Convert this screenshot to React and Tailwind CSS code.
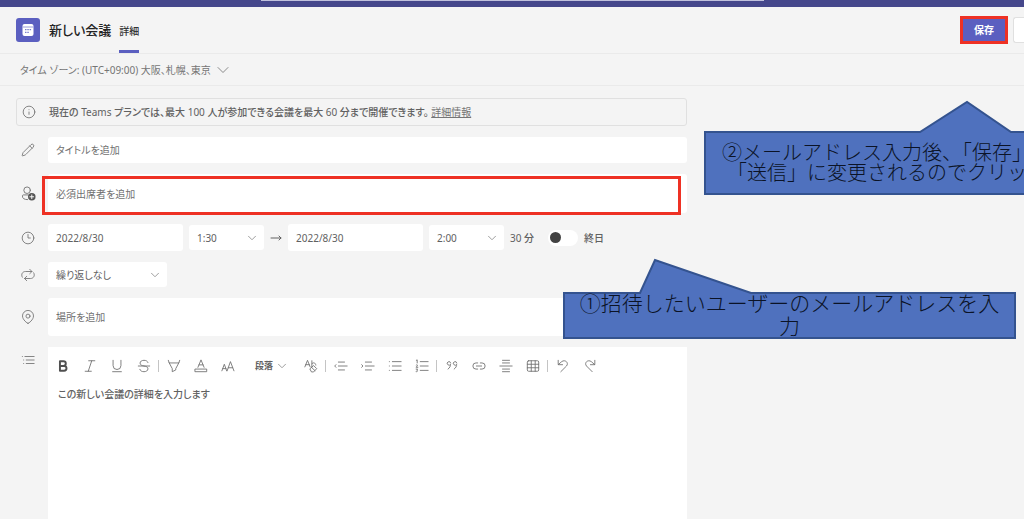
import { useState } from 'react';
import { ChevronDown, Info, Pencil, Clock3, MoveRight } from 'lucide-react';

const FIELD = 'rounded-[3px] bg-white px-2 text-[#616161] placeholder:text-[#707070] outline-none';

function Glyph({ children, className = 'size-[14px]' }) {
  return (
    <svg viewBox="0 0 16 16" className={className} fill="none" stroke="currentColor" strokeWidth="1"
      strokeLinecap="round" strokeLinejoin="round" aria-hidden="true">
      {children}
    </svg>
  );
}

const FORMAT_TOOLS = [
  { label: '太字', icon: <path d="M4.500 2.500h4a2.700 2.700 0 0 1 0 5.400h-4zM4.500 7.900h4.700a2.800 2.800 0 0 1 0 5.600H4.500z" stroke="#505050" strokeWidth="2.200" /> },
  { label: '斜体', icon: <path d="M6.500 2h7M2.500 14h7M10 2 6 14" /> },
  { label: '下線', icon: <path d="M3.500 1.500v6a4.500 4.500 0 0 0 9 0v-6M3 14.500h10" /> },
  { label: '取り消し線', icon: <path d="M12.500 4C12 2.500 10.500 1.500 8 1.500S3.500 2.700 3.500 4.700 5.500 7.500 8 8s4.500 1 4.500 3.200-2 3.300-4.500 3.300-4.300-1-4.800-2.700M1.500 8h13" /> },
];
const COLOR_TOOLS = [
  { label: '蛍光ペン', icon: <path d="M1.500 1.500 2.500 4.500h11l1-3M2.500 4.500 6 11v3.500l4-2V11l3.500-6.500" /> },
  { label: '文字の色', icon: <path d="M4.500 9.500 8 1l3.500 8.500M5.700 6.700h4.600M1.500 11.500h13v3h-13z" /> },
  { label: 'フォント サイズ', icon: <path d="M1 13.500 3.800 6l2.700 7.500M2 11h3.700M7 13.500 10.800 3l4 10.500M8.300 10h5" /> },
];
const LIST_TOOLS = [
  { label: 'インデントを減らす', icon: <path d="M5 3.500h7M5 8h10M5 12.500h7M2.200 6.500.8 8l1.400 1.500" /> },
  { label: 'インデントを増やす', icon: <path d="M5 3.500h7M5 8h10M5 12.500h7M.8 6.500 2.200 8 .8 9.500" /> },
  { label: '箇条書き', icon: <path d="M5 3h10M5 8h10M5 13h10M1.500 3h.1M1.500 8h.1M1.500 13h.1" /> },
  { label: '段落番号', icon: <path d="M6 3h9M6 8h9M6 13h9M1.500 1.500l1-.5v3.500M1.300 7c1-1 2.200 0 1.200 1L1.300 9.500h2M1.300 11.500h1.700l-1 1.300c1.500 0 1.300 2.200-.7 1.700" /> },
];
const INSERT_TOOLS = [
  { label: '引用', icon: <path d="M6.500 4.500a2 2 0 1 0-.2 1.500c.2 2-.8 4-2.800 5.500M13.500 4.500a2 2 0 1 0-.2 1.500c.2 2-.8 4-2.800 5.500" /> },
  { label: 'リンクの挿入', icon: <path d="M6.500 4.500h-2a3.500 3.500 0 0 0 0 7h2M9.500 4.500h2a3.500 3.500 0 0 1 0 7h-2M5 8h6" /> },
  { label: '水平線の挿入', icon: <path d="M4 1.500h8M4 4.500h8M1 8h14M4 11.500h8M4 14.500h8" /> },
  { label: '表の挿入', icon: <><rect x="1.500" y="2" width="13" height="12" rx="1.500" /><path d="M1.500 6h13M1.500 10h13M6 2v12M10.500 2v12" /></> },
];
const HISTORY_TOOLS = [
  { label: '元に戻す', icon: <path d="M2.500 1.500v5h5M2.700 6.300 6.500 3c4-3 8.500 1.500 5.500 5L5.500 14.500" /> },
  { label: 'やり直し', icon: <path d="M13.500 1.500v5h-5M13.300 6.300 9.500 3C5.500 0 1 4.500 4 8l6.500 6.500" /> },
];

function Tools({ items }) {
  return items.map(t => (
    <button key={t.label} type="button" aria-label={t.label} className="flex h-6 w-[26px] items-center justify-center">
      <Glyph>{t.icon}</Glyph>
    </button>
  ));
}

function Divider() {
  return <span className="h-3 w-0.5 border-l border-[#c4c4c4]" />;
}

function Row({ icon, children }) {
  return (
    <div className="flex items-center gap-2">
      <span className="flex w-6 shrink-0 justify-center text-[#757575]">{icon}</span>
      {children}
    </div>
  );
}

function Dropdown({ label, options, className }) {
  return (
    <div className={`relative h-[25px] shrink-0 ${className}`}>
      <select aria-label={label} className={`${FIELD} size-full appearance-none`}>
        {options.map(o => <option key={o}>{o}</option>)}
      </select>
      <ChevronDown className="pointer-events-none absolute top-1.5 right-[5px] size-3.5 text-[#909090]" strokeWidth={1.5} />
    </div>
  );
}

function Callout({ className, viewBox, points, textClass, children }) {
  return (
    <div className={`absolute ${className}`}>
      <svg viewBox={viewBox} className="absolute inset-0 size-full" aria-hidden="true">
        <polygon points={points} fill="#4f71be" stroke="#34538f" strokeWidth="2" />
      </svg>
      <p className={`relative text-center font-light text-[#0b1326] [font-feature-settings:normal] ${textClass}`}>{children}</p>
    </div>
  );
}

export default function App() {
  const [allDay, setAllDay] = useState(false);

  return (
    <div className="relative flex min-h-screen flex-col overflow-hidden bg-[#f4f4f4] text-[10px] leading-4 text-[#616161] [font-family:'Noto_Sans','Noto_Sans_CJK_JP',sans-serif] [font-feature-settings:'palt']">
      {/* Title bar with the lower edge of the search box */}
      <div className="h-[7px] bg-[#45478b]">
        <div className="mx-auto h-px w-[503px] bg-[#c0c1dc]" />
      </div>

      <header className="flex h-[47px] items-center border-b border-[#eaeaea] pl-4">
        <div className="flex size-6 items-center justify-center rounded-[3px] bg-[#5b5fc0]">
          <svg viewBox="0 0 12 12" className="size-3" aria-hidden="true">
            <rect x="0.500" width="11" height="12" rx="2" fill="#fff" />
            <path d="M0.500 3h11" stroke="#9a9cdb" />
            <path d="M3 5.700h6.500M3 8.300h4" stroke="#5b5fc0" strokeDasharray="1.500 0.800" />
          </svg>
        </div>
        <h1 className="ml-[9px] text-[13px] font-medium text-[#242424]">新しい会議</h1>
        <a href="#details" className="ml-2 flex h-full items-center border-b-[3px] border-[#5b5fc0] pt-1 font-medium text-[#333]">詳細</a>
        <div className="ml-auto flex items-center gap-[5px]">
          <button type="button" className="h-7 w-12 border-[3px] border-[#ee3124] bg-[#5b5fc0] font-bold text-white">保存</button>
          <button type="button" aria-label="閉じる" className="h-[26px] w-[11px] rounded-l-[3px] border border-r-0 border-[#e0e0e0] bg-white" />
        </div>
      </header>

      <div className="flex h-8 items-center border-b border-[#eaeaea] pl-5">
        <button type="button" className="flex items-center gap-0.5 text-[#757575]">
          タイム ゾーン: (UTC+09:00) 大阪、札幌、東京
          <ChevronDown className="size-5" strokeWidth={1} />
        </button>
      </div>

      <main className="flex w-full max-w-[703px] flex-1 flex-col gap-[11px] px-4 pt-3">
        <div className="flex h-7 items-center gap-2 rounded-[3px] border border-[#e0e0e0]">
          <span className="flex w-6 justify-center"><Info className="size-[14px] text-[#757575]" strokeWidth={1.5} /></span>
          <p className="font-medium text-[#616161]">
            現在の <span className="font-normal">Teams</span> プランでは、最大 <span className="font-normal">100</span> 人が参加できる会議を最大 <span className="font-normal">60</span> 分まで開催できます。{' '}
            <a href="#plan" className="font-normal text-[#757575] underline">詳細情報</a>
          </p>
        </div>

        <Row icon={<Pencil className="size-[14px]" strokeWidth={1.5} />}>
          <input aria-label="タイトル" placeholder="タイトルを追加" className={`${FIELD} h-[26px] min-w-0 flex-1`} />
        </Row>

        <Row icon={
          <Glyph className="size-[15px]">
            <circle cx="6.500" cy="4.500" r="3.500" />
            <path d="M7 14.500c-3.500 0-5.500-1-5.500-4 0-.5.500-1 1-1h5" />
            <circle cx="11.500" cy="11.500" r="4" fill="#555" stroke="none" />
            <path d="M11.500 9.500v4M9.500 11.500h4" stroke="#fff" />
          </Glyph>
        }>
          <div className="relative flex h-[39px] min-w-0 flex-1">
            <input aria-label="必須出席者" placeholder="必須出席者を追加" className={`${FIELD} min-w-0 flex-1`} />
            <span className="pointer-events-none absolute top-0.5 right-1.5 -bottom-0.5 -left-1.5 border-[3px] border-[#ee3124]" />
          </div>
        </Row>

        <Row icon={<Clock3 className="size-[14px]" strokeWidth={1.5} />}>
          <div className="flex items-center gap-1.5">
            <input aria-label="開始日" defaultValue="2022/8/30" className={`${FIELD} h-[27px] w-[135px]`} />
            <Dropdown label="開始時刻" options={['1:30', '2:00']} className="w-[75px]" />
            <MoveRight className="size-3 shrink-0" strokeWidth={2} />
            <input aria-label="終了日" defaultValue="2022/8/30" className={`${FIELD} h-[27px] w-[135px]`} />
            <Dropdown label="終了時刻" options={['2:00', '2:30']} className="w-[75px]" />
            <span className="whitespace-nowrap">30 <span className="font-medium">分</span></span>
            <label className="ml-2 flex items-center gap-1.5 font-medium whitespace-nowrap">
              <input type="checkbox" checked={allDay} onChange={e => setAllDay(e.target.checked)}
                className="flex h-4 w-[30px] appearance-none items-center rounded-full bg-white px-0.5 before:size-[11px] before:rounded-full before:bg-[#424242] checked:justify-end" />
              終日
            </label>
          </div>
        </Row>

        <Row icon={
          <Glyph>
            <path d="M1.500 10.500C-.5 7 2 4 5 4h7.500M10 1.500 12.500 4 10 6.500M14.500 5.500c2 3.500-.5 6.500-3.500 6.500H4M6.500 9.500 4 12l2.500 2.500" />
          </Glyph>
        }>
          <Dropdown label="繰り返し" options={['繰り返しなし', '毎日', '毎週']} className="w-[119px]" />
        </Row>

        <Row icon={
          <Glyph>
            <path d="M8 15.300c-1 0-6.300-4.300-6.300-8.500a6.300 6.300 0 0 1 12.600 0c0 4.200-5.300 8.500-6.300 8.500z" />
            <circle cx="8" cy="7" r="2.300" />
          </Glyph>
        }>
          <input aria-label="場所" placeholder="場所を追加" className={`${FIELD} h-[38px] min-w-0 flex-1`} />
        </Row>

        <div className="flex flex-1 gap-2">
          <span className="flex w-6 shrink-0 justify-center pt-1.5 text-[#757575]">
            <Glyph><path d="M4.500 4h10.500M6 8h9M6 12h9M1.500 4h.1M3 8h.1M3 12h.1" /></Glyph>
          </span>
          <div className="min-w-0 flex-1 bg-white px-0.5 pt-[7px]">
            <div className="flex items-center gap-px text-[#707070]" role="toolbar" aria-label="書式">
              <Tools items={FORMAT_TOOLS} />
              <Divider />
              <Tools items={COLOR_TOOLS} />
              <button type="button" className="flex h-6 w-[55px] items-center gap-0.5 pl-[13px] text-[9px] font-bold whitespace-nowrap text-[#616161]">
                段落<ChevronDown className="size-3.5 text-[#909090]" strokeWidth={1.5} />
              </button>
              <button type="button" aria-label="書式のクリア" className="flex h-6 w-[26px] items-center justify-center">
                <Glyph>
                  <path d="M1 9 4 1.500 7 9M2 6.500h4M9 2v7M9 5.500c1-2 4.500-1.500 4.500 1.500M7 11l4-3.500 3.500 3.500-3.500 3.800H9zM8.500 9.500l4 3.800" />
                </Glyph>
              </button>
              <Divider />
              <Tools items={LIST_TOOLS} />
              <Divider />
              <Tools items={INSERT_TOOLS} />
              <Divider />
              <Tools items={HISTORY_TOOLS} />
            </div>
            <textarea aria-label="会議の詳細" placeholder="この新しい会議の詳細を入力します"
              className="mt-2 block h-24 w-full resize-none px-2 font-medium placeholder:text-[#616161] outline-none" />
          </div>
        </div>
      </main>

      {/* Step notes laid over the form */}
      <Callout className="top-[100px] left-[704px] h-[95px] w-[346px]" viewBox="0 0 346 95"
        points="1,32 216,32 263,2 307,32 345,32 345,94 1,94"
        textClass="pt-[43px] text-[20px] leading-5 whitespace-pre">
        {'②メールアドレス入力後、「保存」\n「送信」に変更されるのでクリッ'}
      </Callout>
      <Callout className="top-[258px] left-[563px] h-[81px] w-[453px]" viewBox="0 0 453 81"
        points="1,35 77,35 92,2 188,35 452,35 452,80 1,80"
        textClass="px-4 pt-[34px] text-[21px] leading-[23px]">
        ①招待したいユーザーのメールアドレスを入力
      </Callout>
    </div>
  );
}
